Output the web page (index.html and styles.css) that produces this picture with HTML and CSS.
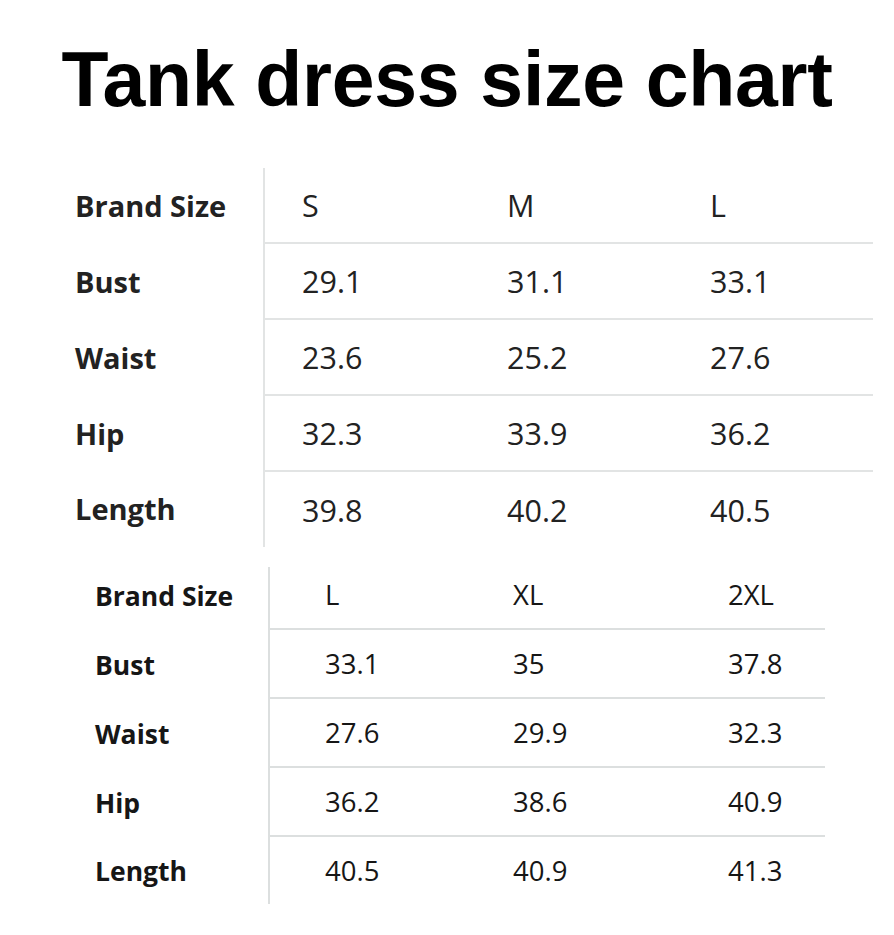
FILE: index.html
```html
<!DOCTYPE html>
<html lang="en">
<head>
<meta charset="utf-8">
<title>Tank dress size chart</title>
<link rel="stylesheet" href="styles.css">
</head>
<body>
<main class="page">
  <h1 class="title">Tank dress size chart</h1>

  <section class="chart chart-one">
    <div class="row">
      <div class="label">Brand Size</div>
      <div class="cell">S</div><div class="cell">M</div><div class="cell">L</div>
    </div>
    <div class="row">
      <div class="label">Bust</div>
      <div class="cell">29.1</div><div class="cell">31.1</div><div class="cell">33.1</div>
    </div>
    <div class="row">
      <div class="label">Waist</div>
      <div class="cell">23.6</div><div class="cell">25.2</div><div class="cell">27.6</div>
    </div>
    <div class="row">
      <div class="label">Hip</div>
      <div class="cell">32.3</div><div class="cell">33.9</div><div class="cell">36.2</div>
    </div>
    <div class="row">
      <div class="label">Length</div>
      <div class="cell">39.8</div><div class="cell">40.2</div><div class="cell">40.5</div>
    </div>
  </section>

  <section class="chart chart-two">
    <div class="row">
      <div class="label">Brand Size</div>
      <div class="cell">L</div><div class="cell">XL</div><div class="cell">2XL</div>
    </div>
    <div class="row">
      <div class="label">Bust</div>
      <div class="cell">33.1</div><div class="cell">35</div><div class="cell">37.8</div>
    </div>
    <div class="row">
      <div class="label">Waist</div>
      <div class="cell">27.6</div><div class="cell">29.9</div><div class="cell">32.3</div>
    </div>
    <div class="row">
      <div class="label">Hip</div>
      <div class="cell">36.2</div><div class="cell">38.6</div><div class="cell">40.9</div>
    </div>
    <div class="row">
      <div class="label">Length</div>
      <div class="cell">40.5</div><div class="cell">40.9</div><div class="cell">41.3</div>
    </div>
  </section>
</main>
</body>
</html>
```

FILE: styles.css
```css
html, body {
  margin: 0;
  padding: 0;
  background: #ffffff;
}

.page {
  width: 894px;
  height: 935px;
  overflow: hidden;
  display: flex;
  flex-direction: column;
}

.title {
  margin: 0;
  padding-top: 35px;
  height: 134px;
  box-sizing: border-box;
  text-align: center;
  font-family: "Liberation Sans", Arial, sans-serif;
  font-weight: 700;
  font-size: 77px;
  line-height: 88px;
  color: #000000;
  letter-spacing: -0.3px;
}

.chart {
  font-family: "Open Sans", "Noto Sans", sans-serif;
  display: flex;
  flex-direction: column;
}

.row {
  display: grid;
  align-items: center;
}

.label {
  font-weight: 700;
  align-self: stretch;
  display: flex;
  align-items: center;
}

.cell {
  font-weight: 400;
  align-self: stretch;
  display: flex;
  align-items: center;
}

/* chart one */
.chart-one {
  margin-top: 34px;
  margin-left: 75px;
  font-size: 29px;
  color: #222222;
}
.chart-one .cell {
  font-size: 30.5px;
}
.chart-one .row {
  grid-template-columns: 190px 205px 203px 200px;
  height: 76px;
}
.chart-one .row:last-child {
  height: 75px;
}
.chart-one .label {
  border-right: 2px solid #e2e4e4;
  padding-bottom: 2px;
}
.chart-one .cell {
  padding-left: 37px;
  border-bottom: 2px solid #e2e4e4;
}
.chart-one .row:last-child .cell {
  border-bottom: none;
}

/* chart two */
.chart-two {
  margin-top: 20px;
  margin-left: 95px;
  font-size: 26.5px;
  color: #161616;
}
.chart-two .cell {
  font-size: 27.5px;
}
.chart-two .row {
  grid-template-columns: 175px 188px 215px 152px;
  height: 69px;
}
.chart-two .row:first-child {
  height: 63px;
}
.chart-two .row:first-child .cell,
.chart-two .row:first-child .label {
  padding-bottom: 6px;
}
.chart-two .label {
  border-right: 2px solid #dcdfdf;
}
.chart-two .cell {
  padding-left: 55px;
  border-bottom: 2px solid #dcdfdf;
}
.chart-two .row:last-child .cell {
  border-bottom: none;
}
.chart-two .row:last-child {
  height: 67px;
}
```
